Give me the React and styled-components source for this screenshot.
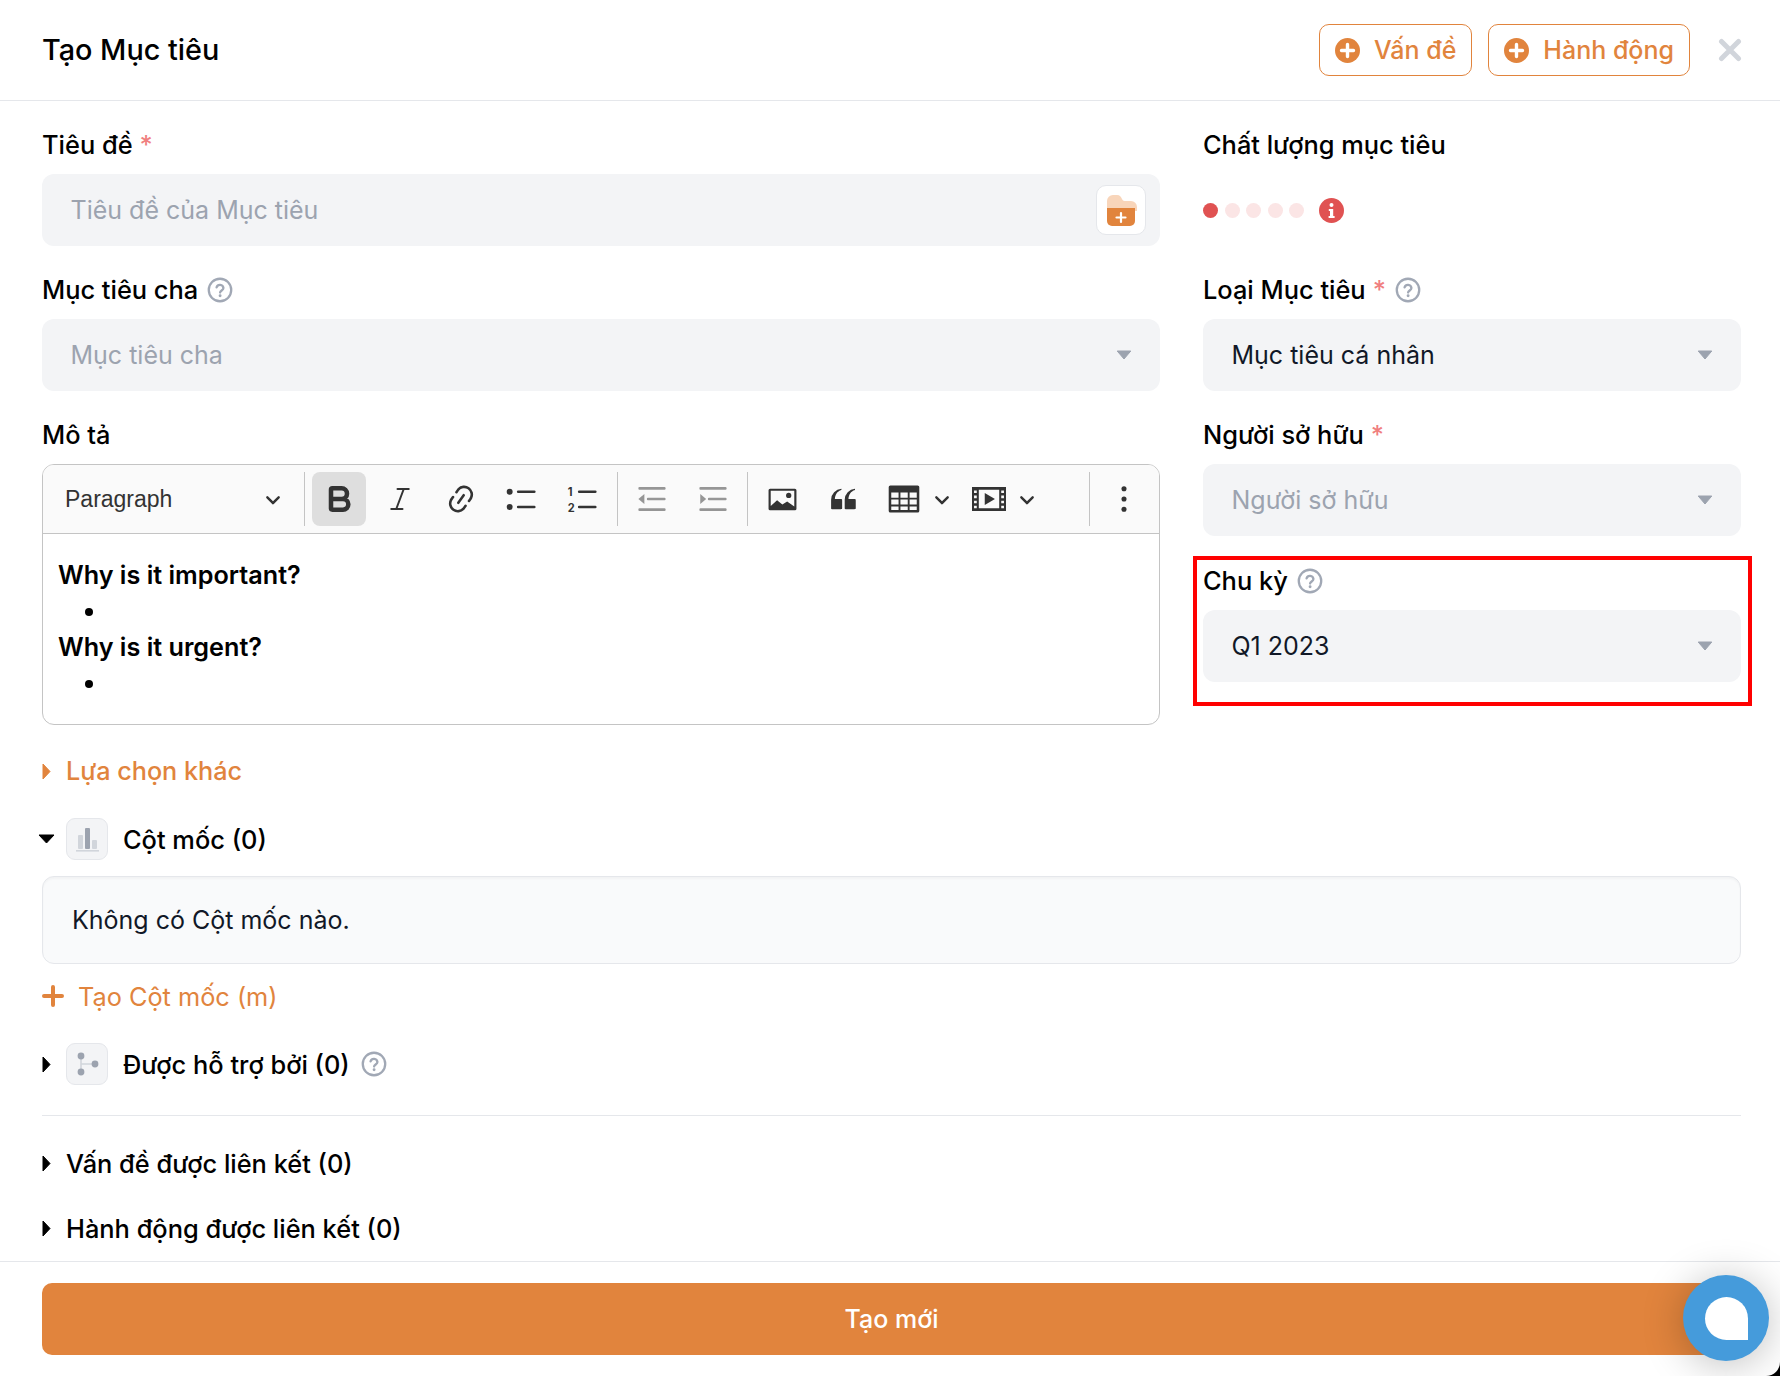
import styled, { createGlobalStyle } from "styled-components"
import { Bold, Italic } from "lucide-react"

const Global = createGlobalStyle`
   html, body {
      margin: 0;
      background: #000;
   }
   * {
      box-sizing: border-box;
   }
`

const orange = "#e1843d"

const Page = styled.div`
   width: 1780px;
   height: 1376px;
   display: flex;
   flex-direction: column;
   position: relative;
   background: #fff;
   border-bottom-right-radius: 14px;
   font-family: Inter, "Noto Sans", sans-serif;
   font-size: 25px;
   color: #111827;
   overflow: hidden;
`

const Header = styled.header`
   height: 101px;
   flex: none;
   display: flex;
   align-items: center;
   gap: 16px;
   padding: 0 39px 0 42px;
   border-bottom: 1px solid #e5e7eb;
`

const Title = styled.h1`
   margin: -1px auto 0 0;
   font-size: 28.8px;
   font-weight: 500;
   color: #000;
`

const HeaderButton = styled.button`
   height: 52px;
   display: flex;
   align-items: center;
   gap: 14px;
   padding: 0 15px;
   background: #fff;
   border: 1px solid ${orange};
   border-radius: 10px;
   color: ${orange};
   font: 500 25px Inter, sans-serif;
`

const Close = styled.button`
   width: 30px;
   height: 30px;
   margin: 0 -4px 0 9px;
   padding: 0;
   display: flex;
   align-items: center;
   justify-content: center;
   border: 0;
   background: none;
`

const Main = styled.main`
   flex: 1;
   padding: 0 39px 0 42px;
`

const Columns = styled.div`
   display: flex;
   gap: 43px;
   padding-top: 30px;
`

const Column = styled.div`
   width: ${(p) => p.$width}px;
   flex: none;
   display: flex;
   flex-direction: column;
   gap: 30px;
`

const Field = styled.div`
   position: relative;

   ${(p) => p.$marked && `
      margin-top: 1px;

      &::after {
         content: "";
         position: absolute;
         inset: -11px -11px -24px -10px;
         border: 4px solid #f00;
         pointer-events: none;
      }
   `}
`

const Label = styled.label`
   height: 27px;
   margin-bottom: 16px;
   display: flex;
   align-items: center;
   gap: 9px;
   font-size: 25.4px;
   font-weight: 500;
   color: #000;
`

const Star = styled.span`
   color: #f07f7f;
   margin-left: -2px;
`

const Control = styled.div`
   height: 72px;
   display: flex;
   align-items: center;
   justify-content: space-between;
   padding: 0 28px 0 28.5px;
   background: #f3f4f6;
   border-radius: 12px;
   color: ${(p) => (p.$empty ? "#9ca3af" : "#111827")};
`

const FolderButton = styled.span`
   width: 50px;
   height: 50px;
   margin-right: -14px;
   display: flex;
   align-items: center;
   justify-content: center;
   background: #fff;
   border: 1px solid #e5e7eb;
   border-radius: 10px;
`

const Quality = styled.div`
   height: 72px;
   display: flex;
   align-items: center;
   gap: 6.5px;
`

const Dot = styled.span`
   width: 15px;
   height: 15px;
   border-radius: 50%;
   background: ${(p) => (p.$on ? "#e05252" : "#fbe5e5")};
`

const InfoSlot = styled.span`
   display: flex;
   margin-left: 8px;
`

const Editor = styled.div`
   height: 261px;
   border: 1px solid #c4c4c4;
   border-radius: 12px;
   overflow: hidden;
`

const Toolbar = styled.div`
   height: 69px;
   display: flex;
   align-items: center;
   gap: 7px;
   padding-right: 8px;
   background: #fafafa;
   border-bottom: 1px solid #c4c4c4;
   color: #333;
`

const Dropdown = styled.div`
   width: 250px;
   flex: none;
   display: flex;
   align-items: center;
   justify-content: space-between;
   padding: 0 12px 0 22px;
   margin-right: 4px;
   font: 23px "Liberation Sans", Arial, sans-serif;
`

const Sep = styled.span`
   width: 1px;
   height: 54px;
   flex: none;
   background: #c4c4c4;
   ${(p) => p.$push && "margin-left: auto;"}
`

const Tool = styled.span`
   width: 54px;
   height: 54px;
   flex: none;
   display: flex;
   align-items: center;
   justify-content: center;
   border-radius: 8px;
   background: ${(p) => (p.$on ? "#dedede" : "transparent")};
   opacity: ${(p) => (p.$off ? 0.5 : 1)};
`

const Split = styled.span`
   width: 78px;
   flex: none;
   display: flex;
   align-items: center;
   gap: 3px;
`

const Content = styled.div`
   padding: 23px 15px;
   font-size: 25.2px;
   line-height: 36px;
   color: #000;

   p {
      margin: 0;
      font-weight: 600;
   }

   ul {
      margin: 0;
      padding-left: 50px;
   }
`

const More = styled.div`
   height: 30px;
   margin-top: 31px;
   display: flex;
   align-items: center;
   gap: 15px;
   font-size: 25.2px;
   color: ${orange};
   font-weight: 500;
`

const Section = styled.div`
   height: ${(p) => p.$height || 30}px;
   margin-top: ${(p) => p.$top}px;
   display: flex;
   align-items: center;
   font-size: 25.4px;
   font-weight: 500;
   color: #000;
`

const CaretSlot = styled.span`
   width: ${(p) => (p.$down ? 28 : 24)}px;
   flex: none;
   display: flex;
   align-items: center;
   margin-left: ${(p) => (p.$down ? "-4px" : "0")};
`

const IconBox = styled.span`
   width: 42px;
   height: 42px;
   margin-right: 15px;
   flex: none;
   display: flex;
   align-items: center;
   justify-content: center;
   background: #f3f4f6;
   border: 1px solid #e5e7eb;
   border-radius: 9px;
`

const HelpSlot = styled.span`
   display: flex;
   margin-left: 11px;
`

const Empty = styled.div`
   height: 88px;
   margin-top: 16px;
   display: flex;
   align-items: center;
   padding: 0 29px;
   background: #f9fafb;
   border: 1px solid #e5e7eb;
   border-radius: 12px;
   box-shadow: inset 0 2px 2px rgba(0, 0, 0, 0.03);
   color: #111827;
`

const AddRow = styled.div`
   height: 30px;
   margin-top: 17px;
   display: flex;
   align-items: center;
   gap: 14px;
   font-size: 25.3px;
   color: ${orange};
`

const Divider = styled.hr`
   height: 1px;
   margin: 30px 0 0;
   border: 0;
   background: #e5e7eb;
`

const Footer = styled.footer`
   flex: none;
   padding: 21px 39px 21px 42px;
   border-top: 1px solid #e5e7eb;
`

const Submit = styled.button`
   width: 100%;
   height: 72px;
   display: block;
   background: ${orange};
   border: 0;
   border-radius: 10px;
   color: #fff;
   font: 500 25px Inter, sans-serif;
`

const Chat = styled.div`
   position: absolute;
   left: 1683px;
   top: 1275px;
   width: 86px;
   height: 86px;
   display: flex;
   align-items: center;
   justify-content: center;
   border-radius: 50%;
   background: #459bdb;
   box-shadow: 0 4px 40px rgba(0, 0, 0, 0.25);

   &::after {
      content: "";
      width: 43px;
      height: 43px;
      background: #fff;
      border-radius: 50% 50% 0 50%;
   }
`

const Help = () => (
   <svg width="26" height="26" viewBox="0 0 25 25" fill="none">
      <circle cx="12.5" cy="12.5" r="10.8" stroke="#a1a8b5" strokeWidth="2.2" />
      <path d="M9.2 10a3.4 3.4 0 0 1 6.6.6c0 2.200-3.200 2.500-3.200 4.400" stroke="#a1a8b5" strokeWidth="2.2" strokeLinecap="round" />
      <circle cx="12.6" cy="18" r="1.4" fill="#a1a8b5" />
   </svg>
)

const SelectCaret = () => (
   <svg width="16" height="10" viewBox="0 0 16 10">
      <path d="M1.2 1h13.6L8 9z" fill="#9ca3af" stroke="#9ca3af" strokeLinejoin="round" />
   </svg>
)

const Caret = ({ down, color = "#000" }) => down ? (
   <svg width="17" height="10" viewBox="0 0 17 10">
      <path d="M1 1h15L8.5 9z" fill={color} stroke={color} strokeLinejoin="round" />
   </svg>
) : (
   <svg width="9" height="17" viewBox="0 0 9 17">
      <path d="M1 1l7 7.5L1 16z" fill={color} stroke={color} strokeLinejoin="round" />
   </svg>
)

const PlusCircle = () => (
   <svg width="25" height="25" viewBox="0 0 25 25">
      <circle cx="12.5" cy="12.5" r="12.5" fill={orange} />
      <path d="M12.5 6.5v12M6.5 12.5h12" stroke="#fff" strokeWidth="3.4" strokeLinecap="round" />
   </svg>
)

const Folder = () => (
   <svg width="32" height="34" viewBox="0 0 32 34">
      <path d="M2 8a6 6 0 0 1 6-6h4c3 0 4 2 5 4s2 2 4 2h5a6 6 0 0 1 6 6v4H2z" fill="#f8d5ba" />
      <path d="M2 15h28v13a5 5 0 0 1-5 5H7a5 5 0 0 1-5-5z" fill={orange} />
      <path d="M16 20v9M11.5 24.5h9" stroke="#fff" strokeWidth="2.2" strokeLinecap="round" />
   </svg>
)

const Info = () => (
   <svg width="25" height="25" viewBox="0 0 25 25">
      <circle cx="12.5" cy="12.5" r="12.5" fill="#e05252" />
      <circle cx="12.5" cy="7" r="2" fill="#fff" />
      <path d="M9.8 11h4.4v7h1.4v2H9.6v-2h1.4v-5H9.8z" fill="#fff" />
   </svg>
)

const Chevron = () => (
   <svg width="16" height="16" viewBox="0 0 10 10" fill="#333">
      <path d="M.941 4.523a.75.75 0 1 1 1.06-1.06l3.006 3.005 3.005-3.005a.75.75 0 1 1 1.06 1.06l-3.549 3.55a.75.75 0 0 1-1.168-.136L.941 4.523z" />
   </svg>
)

const Icon20 = ({ size = 34, children }) => (
   <svg width={size} height={size} viewBox="0 0 20 20" fill="#333">{children}</svg>
)

const Lines = ({ inward }) => (
   <Icon20>
      <rect x="2" y="3" width="16" height="1.5" rx=".6" />
      <rect x="7" y="9.25" width="11" height="1.5" rx=".6" />
      <rect x="2" y="15.5" width="16" height="1.5" rx=".6" />
      {inward
         ? <path d="M6 10l-3.500-3v6z" />
         : <path d="M2 10l3.500-3v6z" />}
   </Icon20>
)

const ChartIcon = () => (
   <svg width="26" height="26" viewBox="0 0 26 26">
      <rect x="2" y="24" width="23" height="1.6" fill="#d1d5db" />
      <rect x="4" y="9" width="5" height="14" rx="1" fill="#d1d5db" />
      <rect x="11" y="2" width="5" height="21" rx="1" fill="#9ca3af" />
      <rect x="18" y="14" width="5" height="9" rx="1" fill="#d1d5db" />
   </svg>
)

const BranchIcon = () => (
   <svg width="26" height="26" viewBox="0 0 26 26">
      <path d="M7 6v14M7 13h14" stroke="#d1d5db" strokeWidth="1.6" fill="none" />
      <circle cx="7" cy="5" r="3.4" fill="#9ca3af" />
      <circle cx="7" cy="21" r="3.4" fill="#9ca3af" />
      <circle cx="21" cy="13" r="3.4" fill="#9ca3af" />
   </svg>
)

const Toolbox = () => (
   <Toolbar>
      <Dropdown>Paragraph <Chevron /></Dropdown>
      <Sep />
      <Tool $on><Bold size={32} strokeWidth={3.4} /></Tool>
      <Tool><Italic size={30} strokeWidth={1.6} /></Tool>
      <Tool>
         <Icon20>
            <path d="m11.077 15 .991-1.416a.75.75 0 1 1 1.229.86l-1.148 1.64a.748.748 0 0 1-.217.206 5.251 5.251 0 0 1-8.503-5.955.741.741 0 0 1 .12-.274l1.147-1.639a.75.75 0 1 1 1.228.86L4.933 10.7l.006.003a3.75 3.75 0 0 0 6.132 4.294l.006.004zm5.494-5.335a.748.748 0 0 1-.12.274l-1.147 1.639a.75.75 0 1 1-1.228-.86l.86-1.23a3.75 3.75 0 0 0-6.144-4.301l-.86 1.229a.75.75 0 0 1-1.229-.86l1.148-1.64a.748.748 0 0 1 .217-.206 5.251 5.251 0 0 1 8.503 5.955zm-4.563-2.532a.75.75 0 0 1 .184 1.045l-3.155 4.505a.75.75 0 1 1-1.229-.86l3.155-4.506a.75.75 0 0 1 1.045-.184z" />
         </Icon20>
      </Tool>
      <Tool>
         <Icon20>
            <circle cx="2.75" cy="5.75" r="1.75" />
            <circle cx="2.75" cy="14.75" r="1.75" />
            <rect x="7" y="5" width="11" height="1.5" rx=".75" />
            <rect x="7" y="14" width="11" height="1.5" rx=".75" />
         </Icon20>
      </Tool>
      <Tool>
         <Icon20>
            <text x="1" y="8" fontSize="6.5" fontWeight="700" fontFamily="Inter, sans-serif">1</text>
            <text x="1" y="17.500" fontSize="6.5" fontWeight="700" fontFamily="Inter, sans-serif">2</text>
            <rect x="7" y="5" width="11" height="1.5" rx=".75" />
            <rect x="7" y="14" width="11" height="1.5" rx=".75" />
         </Icon20>
      </Tool>
      <Sep />
      <Tool $off><Lines /></Tool>
      <Tool $off><Lines inward /></Tool>
      <Sep />
      <Tool>
         <Icon20 size={31}>
            <path fillRule="evenodd" d="M2 3h16a1 1 0 0 1 1 1v12a1 1 0 0 1-1 1H2a1 1 0 0 1-1-1V4a1 1 0 0 1 1-1zm.4 1.4v9.8l4.1-3.7 3.4 2.8 3.1-2 4.6 3.2V4.4z" />
            <circle cx="14" cy="7.4" r="1.7" />
         </Icon20>
      </Tool>
      <Tool>
         <Icon20>
            <path d="M3 10.423a6.5 6.5 0 0 1 6.056-6.408l.038.67C6.448 5.423 5.354 7.663 5.22 10H9c.552 0 .5.432.5.986v4.511c0 .554-.448.503-1 .503h-5c-.552 0-.5-.449-.5-1.003v-4.574zm8 0a6.5 6.5 0 0 1 6.056-6.408l.038.67c-2.646.739-3.74 2.979-3.873 5.315H17c.552 0 .5.432.5.986v4.511c0 .554-.448.503-1 .503h-5c-.552 0-.5-.449-.5-1.003v-4.574z" />
         </Icon20>
      </Tool>
      <Split>
         <Tool>
            <Icon20>
               <path fillRule="evenodd" d="M2 2h16a1 1 0 0 1 1 1v14a1 1 0 0 1-1 1H2a1 1 0 0 1-1-1V3a1 1 0 0 1 1-1zm.5 4.200v3h4.300v-3zm5.400 0v3h4.300v-3zm5.400 0v3h4.200v-3zM2.500 10.300v3h4.300v-3zm5.400 0v3h4.300v-3zm5.400 0v3h4.200v-3zM2.500 14.400v2.100h4.300v-2.100zm5.400 0v2.100h4.300v-2.100zm5.400 0v2.100h4.200v-2.100z" />
            </Icon20>
         </Tool>
         <Chevron />
      </Split>
      <Split>
         <Tool>
            <Icon20>
               <path fillRule="evenodd" d="M0 3h20v14H0zm4 1.500v11h12v-11zM1.200 5v1.500h1.600V5zm0 3v1.500h1.600V8zm0 3v1.500h1.600V11zm0 3v1.500h1.600V14zM17.200 5v1.500h1.600V5zm0 3v1.500h1.600V8zm0 3v1.500h1.600V11zm0 3v1.500h1.600V14z" />
               <path d="M7.500 6.500l6 3.500-6 3.500z" />
            </Icon20>
         </Tool>
         <Chevron />
      </Split>
      <Sep $push />
      <Tool>
         <Icon20>
            <circle cx="10" cy="4" r="1.500" />
            <circle cx="10" cy="10" r="1.500" />
            <circle cx="10" cy="16" r="1.500" />
         </Icon20>
      </Tool>
   </Toolbar>
)

export default function App() {
   return (
      <>
         <Global />
         <Page>
            <Header>
               <Title>Tạo Mục tiêu</Title>
               <HeaderButton><PlusCircle /> Vấn đề</HeaderButton>
               <HeaderButton><PlusCircle /> Hành động</HeaderButton>
               <Close aria-label="Đóng">
                  <svg width="24" height="24" viewBox="0 0 24 24">
                     <path d="M3.500 3.500l17 17M20.500 3.500l-17 17" stroke="#d1d5db" strokeWidth="5" strokeLinecap="round" />
                  </svg>
               </Close>
            </Header>
            <Main>
               <Columns>
                  <Column $width={1118}>
                     <Field>
                        <Label>Tiêu đề <Star>*</Star></Label>
                        <Control $empty>
                           Tiêu đề của Mục tiêu
                           <FolderButton><Folder /></FolderButton>
                        </Control>
                     </Field>
                     <Field>
                        <Label>Mục tiêu cha <Help /></Label>
                        <Control $empty>Mục tiêu cha <SelectCaret /></Control>
                     </Field>
                     <Field>
                        <Label>Mô tả</Label>
                        <Editor>
                           <Toolbox />
                           <Content>
                              <p>Why is it important?</p>
                              <ul><li>&nbsp;</li></ul>
                              <p>Why is it urgent?</p>
                              <ul><li>&nbsp;</li></ul>
                           </Content>
                        </Editor>
                     </Field>
                  </Column>
                  <Column $width={538}>
                     <Field>
                        <Label>Chất lượng mục tiêu</Label>
                        <Quality>
                           <Dot $on /><Dot /><Dot /><Dot /><Dot />
                           <InfoSlot><Info /></InfoSlot>
                        </Quality>
                     </Field>
                     <Field>
                        <Label>Loại Mục tiêu <Star>*</Star> <Help /></Label>
                        <Control>Mục tiêu cá nhân <SelectCaret /></Control>
                     </Field>
                     <Field>
                        <Label>Người sở hữu <Star>*</Star></Label>
                        <Control $empty>Người sở hữu <SelectCaret /></Control>
                     </Field>
                     <Field $marked>
                        <Label>Chu kỳ <Help /></Label>
                        <Control>Q1 2023 <SelectCaret /></Control>
                     </Field>
                  </Column>
               </Columns>
               <More><Caret color={orange} /> Lựa chọn khác</More>
               <Section $height={42} $top={32}>
                  <CaretSlot $down><Caret down /></CaretSlot>
                  <IconBox><ChartIcon /></IconBox>
                  Cột mốc (0)
               </Section>
               <Empty>Không có Cột mốc nào.</Empty>
               <AddRow>
                  <svg width="22" height="22" viewBox="0 0 22 22">
                     <path d="M11 2v18M2 11h18" stroke={orange} strokeWidth="4" strokeLinecap="round" />
                  </svg>
                  Tạo Cột mốc (m)
               </AddRow>
               <Section $height={42} $top={32}>
                  <CaretSlot><Caret /></CaretSlot>
                  <IconBox><BranchIcon /></IconBox>
                  Được hỗ trợ bởi (0)
                  <HelpSlot><Help /></HelpSlot>
               </Section>
               <Divider />
               <Section $top={32}><CaretSlot><Caret /></CaretSlot>Vấn đề được liên kết (0)</Section>
               <Section $top={35}><CaretSlot><Caret /></CaretSlot>Hành động được liên kết (0)</Section>
            </Main>
            <Footer><Submit>Tạo mới</Submit></Footer>
            <Chat />
         </Page>
      </>
   )
}
